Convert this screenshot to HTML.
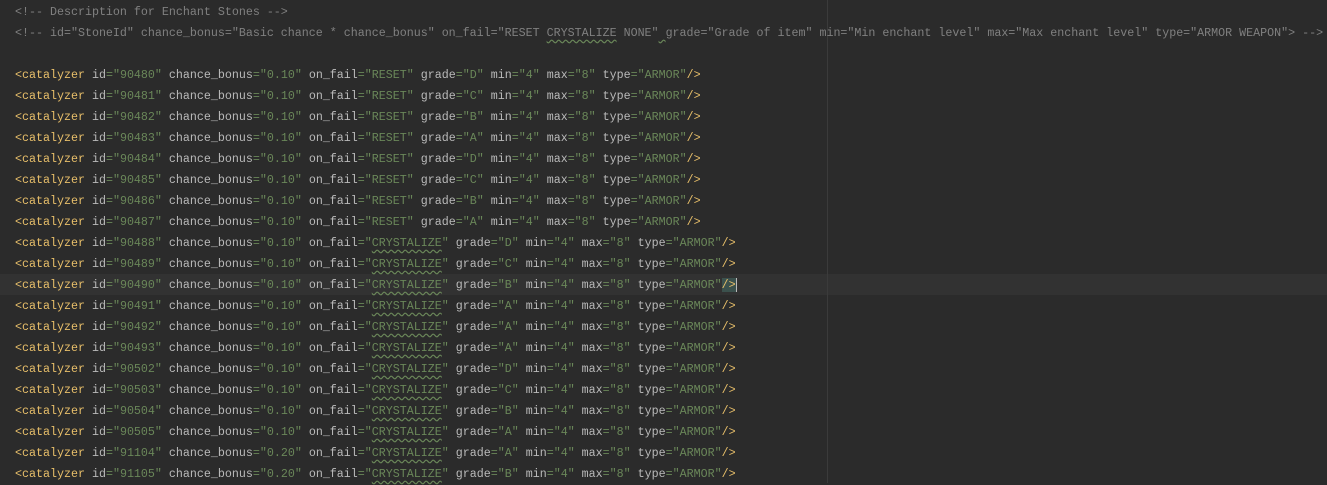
<!DOCTYPE html><html><head><style>
body{margin:0;background:#2b2b2b;width:1327px;height:483px;overflow:hidden;position:relative}
.c{position:absolute;left:15px;top:2px;font:11.67px/21px "Liberation Mono",monospace;color:#bababa}
.l{height:21px;white-space:pre}
.t{color:#e8bf6a}.v{color:#6a8759}.m{color:#808080}
.w{text-decoration:underline wavy #6a8759;text-underline-offset:3px}
.cur{position:absolute;left:0;top:274px;width:1327px;height:21px;background:#323232}
.g{position:absolute;left:827px;top:0;width:1px;height:483px;background:#3b3b3b}
.h{background:#3b514d;color:#e8bf6a;border-right:1px solid #bbb}
</style></head><body>
<div class="cur"></div><div class="g"></div>
<div class="c"><div class="l m">&lt;!-- Description for Enchant Stones --&gt;</div><div class="l m">&lt;!-- id="StoneId" chance_bonus="Basic chance * chance_bonus" on_fail="RESET <span class="w">CRYSTALIZE</span> NONE"<span class="w"> </span>grade="Grade of item" min="Min enchant level" max="Max enchant level" type="ARMOR WEAPON"&gt; --&gt;</div><div class="l"> </div><div class="l"><span class="t">&lt;catalyzer</span> id<span class="v">="90480"</span> chance_bonus<span class="v">="0.10"</span> on_fail<span class="v">="RESET"</span> grade<span class="v">="D"</span> min<span class="v">="4"</span> max<span class="v">="8"</span> type<span class="v">="ARMOR"</span><span class="t">/&gt;</span></div><div class="l"><span class="t">&lt;catalyzer</span> id<span class="v">="90481"</span> chance_bonus<span class="v">="0.10"</span> on_fail<span class="v">="RESET"</span> grade<span class="v">="C"</span> min<span class="v">="4"</span> max<span class="v">="8"</span> type<span class="v">="ARMOR"</span><span class="t">/&gt;</span></div><div class="l"><span class="t">&lt;catalyzer</span> id<span class="v">="90482"</span> chance_bonus<span class="v">="0.10"</span> on_fail<span class="v">="RESET"</span> grade<span class="v">="B"</span> min<span class="v">="4"</span> max<span class="v">="8"</span> type<span class="v">="ARMOR"</span><span class="t">/&gt;</span></div><div class="l"><span class="t">&lt;catalyzer</span> id<span class="v">="90483"</span> chance_bonus<span class="v">="0.10"</span> on_fail<span class="v">="RESET"</span> grade<span class="v">="A"</span> min<span class="v">="4"</span> max<span class="v">="8"</span> type<span class="v">="ARMOR"</span><span class="t">/&gt;</span></div><div class="l"><span class="t">&lt;catalyzer</span> id<span class="v">="90484"</span> chance_bonus<span class="v">="0.10"</span> on_fail<span class="v">="RESET"</span> grade<span class="v">="D"</span> min<span class="v">="4"</span> max<span class="v">="8"</span> type<span class="v">="ARMOR"</span><span class="t">/&gt;</span></div><div class="l"><span class="t">&lt;catalyzer</span> id<span class="v">="90485"</span> chance_bonus<span class="v">="0.10"</span> on_fail<span class="v">="RESET"</span> grade<span class="v">="C"</span> min<span class="v">="4"</span> max<span class="v">="8"</span> type<span class="v">="ARMOR"</span><span class="t">/&gt;</span></div><div class="l"><span class="t">&lt;catalyzer</span> id<span class="v">="90486"</span> chance_bonus<span class="v">="0.10"</span> on_fail<span class="v">="RESET"</span> grade<span class="v">="B"</span> min<span class="v">="4"</span> max<span class="v">="8"</span> type<span class="v">="ARMOR"</span><span class="t">/&gt;</span></div><div class="l"><span class="t">&lt;catalyzer</span> id<span class="v">="90487"</span> chance_bonus<span class="v">="0.10"</span> on_fail<span class="v">="RESET"</span> grade<span class="v">="A"</span> min<span class="v">="4"</span> max<span class="v">="8"</span> type<span class="v">="ARMOR"</span><span class="t">/&gt;</span></div><div class="l"><span class="t">&lt;catalyzer</span> id<span class="v">="90488"</span> chance_bonus<span class="v">="0.10"</span> on_fail<span class="v">="<span class="w">CRYSTALIZE</span>"</span> grade<span class="v">="D"</span> min<span class="v">="4"</span> max<span class="v">="8"</span> type<span class="v">="ARMOR"</span><span class="t">/&gt;</span></div><div class="l"><span class="t">&lt;catalyzer</span> id<span class="v">="90489"</span> chance_bonus<span class="v">="0.10"</span> on_fail<span class="v">="<span class="w">CRYSTALIZE</span>"</span> grade<span class="v">="C"</span> min<span class="v">="4"</span> max<span class="v">="8"</span> type<span class="v">="ARMOR"</span><span class="t">/&gt;</span></div><div class="l"><span class="t">&lt;catalyzer</span> id<span class="v">="90490"</span> chance_bonus<span class="v">="0.10"</span> on_fail<span class="v">="<span class="w">CRYSTALIZE</span>"</span> grade<span class="v">="B"</span> min<span class="v">="4"</span> max<span class="v">="8"</span> type<span class="v">="ARMOR"</span><span class="h">/&gt;</span></div><div class="l"><span class="t">&lt;catalyzer</span> id<span class="v">="90491"</span> chance_bonus<span class="v">="0.10"</span> on_fail<span class="v">="<span class="w">CRYSTALIZE</span>"</span> grade<span class="v">="A"</span> min<span class="v">="4"</span> max<span class="v">="8"</span> type<span class="v">="ARMOR"</span><span class="t">/&gt;</span></div><div class="l"><span class="t">&lt;catalyzer</span> id<span class="v">="90492"</span> chance_bonus<span class="v">="0.10"</span> on_fail<span class="v">="<span class="w">CRYSTALIZE</span>"</span> grade<span class="v">="A"</span> min<span class="v">="4"</span> max<span class="v">="8"</span> type<span class="v">="ARMOR"</span><span class="t">/&gt;</span></div><div class="l"><span class="t">&lt;catalyzer</span> id<span class="v">="90493"</span> chance_bonus<span class="v">="0.10"</span> on_fail<span class="v">="<span class="w">CRYSTALIZE</span>"</span> grade<span class="v">="A"</span> min<span class="v">="4"</span> max<span class="v">="8"</span> type<span class="v">="ARMOR"</span><span class="t">/&gt;</span></div><div class="l"><span class="t">&lt;catalyzer</span> id<span class="v">="90502"</span> chance_bonus<span class="v">="0.10"</span> on_fail<span class="v">="<span class="w">CRYSTALIZE</span>"</span> grade<span class="v">="D"</span> min<span class="v">="4"</span> max<span class="v">="8"</span> type<span class="v">="ARMOR"</span><span class="t">/&gt;</span></div><div class="l"><span class="t">&lt;catalyzer</span> id<span class="v">="90503"</span> chance_bonus<span class="v">="0.10"</span> on_fail<span class="v">="<span class="w">CRYSTALIZE</span>"</span> grade<span class="v">="C"</span> min<span class="v">="4"</span> max<span class="v">="8"</span> type<span class="v">="ARMOR"</span><span class="t">/&gt;</span></div><div class="l"><span class="t">&lt;catalyzer</span> id<span class="v">="90504"</span> chance_bonus<span class="v">="0.10"</span> on_fail<span class="v">="<span class="w">CRYSTALIZE</span>"</span> grade<span class="v">="B"</span> min<span class="v">="4"</span> max<span class="v">="8"</span> type<span class="v">="ARMOR"</span><span class="t">/&gt;</span></div><div class="l"><span class="t">&lt;catalyzer</span> id<span class="v">="90505"</span> chance_bonus<span class="v">="0.10"</span> on_fail<span class="v">="<span class="w">CRYSTALIZE</span>"</span> grade<span class="v">="A"</span> min<span class="v">="4"</span> max<span class="v">="8"</span> type<span class="v">="ARMOR"</span><span class="t">/&gt;</span></div><div class="l"><span class="t">&lt;catalyzer</span> id<span class="v">="91104"</span> chance_bonus<span class="v">="0.20"</span> on_fail<span class="v">="<span class="w">CRYSTALIZE</span>"</span> grade<span class="v">="A"</span> min<span class="v">="4"</span> max<span class="v">="8"</span> type<span class="v">="ARMOR"</span><span class="t">/&gt;</span></div><div class="l"><span class="t">&lt;catalyzer</span> id<span class="v">="91105"</span> chance_bonus<span class="v">="0.20"</span> on_fail<span class="v">="<span class="w">CRYSTALIZE</span>"</span> grade<span class="v">="B"</span> min<span class="v">="4"</span> max<span class="v">="8"</span> type<span class="v">="ARMOR"</span><span class="t">/&gt;</span></div></div>
</body></html>
